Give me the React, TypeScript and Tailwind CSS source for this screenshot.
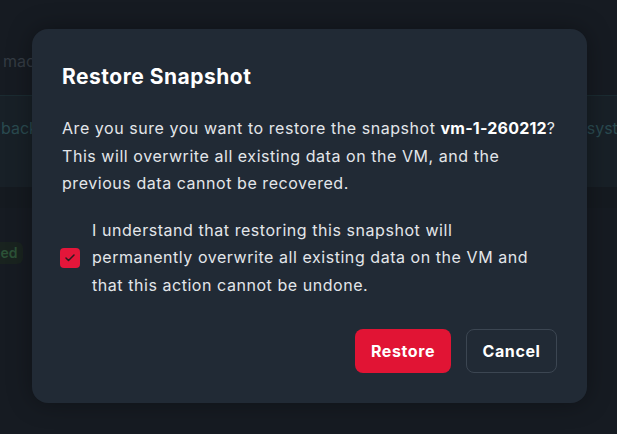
import { Check } from "lucide-react";

export default function App() {
  return (
    <div
      className="relative w-[617px] h-[434px] overflow-hidden bg-[#161b22]"
      style={{ fontFamily: "Inter, 'Noto Sans', sans-serif" }}
    >
      {/* Dimmed page behind the dialog */}
      <div className="flex flex-col">
        <div className="h-[96px] flex items-end pb-[22px] pl-[3px] border-b border-[#1b2b31]">
          <span className="text-[16px] text-[#343b44]">machine</span>
        </div>
        <div className="h-[91px] bg-[#182027] flex items-start pt-[20px] justify-between">
          <span className="text-[16px] text-[#2a4a50] ml-[1px]">backup</span>
          <span className="text-[16px] text-[#2a4a50] -mr-[24px]">system</span>
        </div>
        <div className="h-[21px] bg-[#151a20]" />
        <div className="pt-[32px]">
          <span className="inline-flex items-center h-[22px] -ml-[46px] pl-[6px] pr-[6px] rounded-md bg-[#19231f] text-[14px] font-semibold text-[#2c5237]">
            Finished
          </span>
        </div>
      </div>

      {/* Dialog */}
      <div className="absolute left-[32px] top-[29px] w-[555px] rounded-[16px] bg-[#212a35] shadow-[0_0_24px_rgba(0,0,0,0.35)] px-[30px] pt-[34px] pb-[30px]">
        <h2 className="text-[21px] leading-[28px] font-bold text-white tracking-[0.5px]">Restore Snapshot</h2>

        <p className="mt-[24px] text-[16px] leading-[27.5px] text-[#e3e6ea] tracking-[0.55px]">
          Are you sure you want to restore the snapshot{" "}
          <span className="font-bold text-white tracking-[0.2px]">vm-1-260212</span>?
          <br />
          This will overwrite all existing data on the VM, and the
          <br />
          previous data cannot be recovered.
        </p>

        <label className="mt-[19px] flex items-center gap-[12px]">
          <span className="w-[20px] h-[20px] shrink-0 rounded-[4px] bg-[#e3163a] flex items-center justify-center -ml-[2px]">
            <Check className="w-[12px] h-[12px] text-[#2a1a20]" strokeWidth={3} />
          </span>
          <span className="text-[16px] leading-[27.5px] text-[#e3e6ea] tracking-[0.55px] whitespace-nowrap">
            I understand that restoring this snapshot will
            <br />
            permanently overwrite all existing data on the VM and
            <br />
            that this action cannot be undone.
          </span>
        </label>

        <div className="mt-[30px] flex justify-end gap-[15px]">
          <button className="h-[44px] w-[96px] rounded-[8px] bg-[#e11434] text-white text-[16px] font-bold tracking-[0.6px]">
            Restore
          </button>
          <button className="h-[44px] w-[91px] rounded-[8px] border border-[#3c4652] text-white text-[16px] font-bold tracking-[0.6px]">
            Cancel
          </button>
        </div>
      </div>
    </div>
  );
}
